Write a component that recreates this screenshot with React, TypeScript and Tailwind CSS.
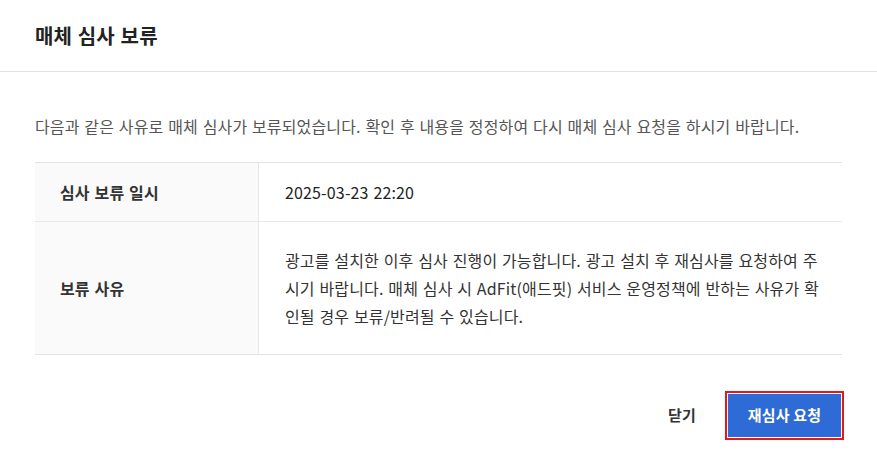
export default function App() {
  const font = { fontFamily: '"Noto Sans CJK KR", "Noto Sans", sans-serif' };
  return (
    <div className="w-[877px] h-[473px] bg-white tracking-[0.15px] [word-spacing:1px]" style={font}>
      <div className="h-[72px] border-b border-[#e1e1e1] flex items-center px-[35px]">
        <h1 className="text-[20px] font-bold text-[#222] leading-none">매체 심사 보류</h1>
      </div>
      <div className="px-[35px]">
        <p className="mt-[43px] text-[16px] leading-[22px] text-[#555]">
          다음과 같은 사유로 매체 심사가 보류되었습니다. 확인 후 내용을 정정하여 다시 매체 심사 요청을 하시기 바랍니다.
        </p>
        <div className="mt-[25px] border-t border-b border-[#e3e3e3] text-[16px]">
          <div className="flex h-[59px] border-b border-[#e8e8e8]">
            <div className="w-[224px] bg-[#fafafa] border-r border-[#e8e8e8] flex items-center pl-[25px] font-bold text-[#333]">
              심사 보류 일시
            </div>
            <div className="flex-1 flex items-center pl-[26px] text-[#222]">2025-03-23 22:20</div>
          </div>
          <div className="flex h-[132px]">
            <div className="w-[224px] bg-[#fafafa] border-r border-[#e8e8e8] flex items-center pl-[25px] font-bold text-[#333]">
              보류 사유
            </div>
            <div className="flex-1 flex items-center pl-[26px] pr-[20px] text-[#333] leading-[28px]">
              광고를 설치한 이후 심사 진행이 가능합니다. 광고 설치 후 재심사를 요청하여 주시기 바랍니다. 매체 심사 시 AdFit(애드핏) 서비스 운영정책에 반하는 사유가 확인될 경우 보류/반려될 수 있습니다.
            </div>
          </div>
        </div>
        <div className="mt-[39px] flex items-center justify-end">
          <button className="text-[15px] font-bold text-[#333] mr-[32px]">닫기</button>
          <button className="w-[113px] h-[43px] mr-[1px] bg-[#2f6bd6] text-white text-[15px] font-bold outline-2 outline-[#e8161b] outline-offset-1">
            재심사 요청
          </button>
        </div>
      </div>
    </div>
  );
}
